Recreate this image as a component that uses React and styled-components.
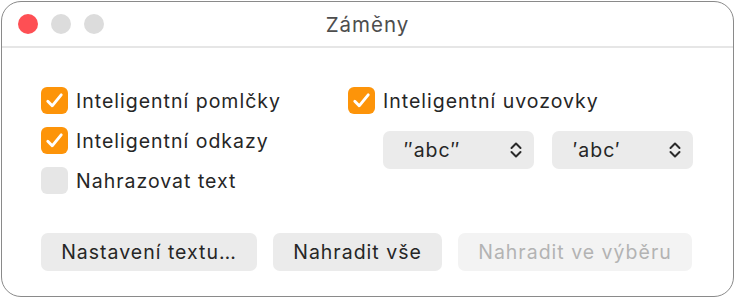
import React from "react";
import styled, { createGlobalStyle } from "styled-components";

const GlobalStyle = createGlobalStyle`
  html, body {
    margin: 0;
    padding: 0;
    background: #ffffff;
  }
  body {
    font-family: Inter, "Noto Sans", "Liberation Sans", sans-serif;
    -webkit-font-smoothing: antialiased;
  }
`;

const Window = styled.div`
  box-sizing: border-box;
  margin: 1px 0 0 1px;
  width: 733px;
  height: 296px;
  border: 1px solid #8a8a8a;
  border-radius: 20px;
  background: #ffffff;
  overflow: hidden;
  display: flex;
  flex-direction: column;
`;

const TitleBar = styled.div`
  height: 44px;
  flex: none;
  border-bottom: 2px solid #e6e6e6;
  display: flex;
  align-items: center;
  position: relative;
  padding-left: 16px;
`;

const Lights = styled.div`
  display: flex;
  gap: 13px;
`;

const Light = styled.span`
  width: 20px;
  height: 20px;
  border-radius: 50%;
  background: ${(p) => p.$color};
`;

const Title = styled.div`
  position: absolute;
  left: 0;
  right: 0;
  top: 0;
  height: 44px;
  display: flex;
  align-items: center;
  justify-content: center;
  font-size: 20.5px;
  letter-spacing: 1px;
  color: #4d4d4d;
  pointer-events: none;
`;

const Body = styled.div`
  flex: 1;
  padding: 39px 0 0 39px;
  display: flex;
  flex-direction: column;
`;

const Columns = styled.div`
  display: flex;
`;

const Column = styled.div`
  display: flex;
  flex-direction: column;
  gap: 13px;
  width: ${(p) => p.$width || "auto"};
`;

const CheckRow = styled.label`
  display: flex;
  align-items: center;
  gap: 8px;
  height: 27px;
  font-size: 19.5px;
  letter-spacing: 1px;
  color: #262626;
`;

const Box = styled.span`
  width: 27px;
  height: 27px;
  border-radius: 6px;
  background: ${(p) => (p.$checked ? "#fd9409" : "#e6e6e6")};
  display: flex;
  align-items: center;
  justify-content: center;
  flex: none;
`;

const Popups = styled.div`
  display: flex;
  gap: 18px;
  margin: 4px 0 0 35px;
`;

const Popup = styled.div`
  box-sizing: border-box;
  width: ${(p) => p.$width}px;
  height: 38px;
  border-radius: 7px;
  background: #ebebeb;
  display: flex;
  align-items: center;
  justify-content: space-between;
  padding: 0 11px 0 21px;
  font-size: 19.5px;
  letter-spacing: 1px;
  color: #262626;
`;

const Buttons = styled.div`
  display: flex;
  gap: 16px;
  margin-top: 39px;
`;

const Button = styled.button`
  box-sizing: border-box;
  height: 38px;
  width: ${(p) => p.$width}px;
  border: none;
  border-radius: 7px;
  background: ${(p) => (p.disabled ? "#f3f3f3" : "#ebebeb")};
  color: ${(p) => (p.disabled ? "#b3b3b3" : "#262626")};
  font-family: inherit;
  font-size: 19.5px;
  letter-spacing: 1px;
  padding: 0;
`;

const Check = () => (
  <svg width="19" height="17" viewBox="0 0 19 17">
    <path
      d="M2.8 9.2 L7.2 13.8 L16.2 2.8"
      fill="none"
      stroke="#ffffff"
      strokeWidth="2.9"
      strokeLinecap="round"
      strokeLinejoin="round"
    />
  </svg>
);

const Chevrons = () => (
  <svg width="14" height="18" viewBox="0 0 14 18">
    <path
      d="M2.5 7 L7 2.5 L11.5 7 M2.5 11 L7 15.5 L11.5 11"
      fill="none"
      stroke="#2a2a2a"
      strokeWidth="2"
      strokeLinecap="round"
      strokeLinejoin="round"
    />
  </svg>
);

const Checkbox = ({ checked, children }) => (
  <CheckRow>
    <Box $checked={checked}>{checked && <Check />}</Box>
    {children}
  </CheckRow>
);

export default function App() {
  return (
    <>
      <GlobalStyle />
      <Window>
        <TitleBar>
          <Lights>
            <Light $color="#fe4f54" />
            <Light $color="#dcdcdc" />
            <Light $color="#dcdcdc" />
          </Lights>
          <Title>Záměny</Title>
        </TitleBar>
        <Body>
          <Columns>
            <Column $width="307px">
              <Checkbox checked>Inteligentní pomlčky</Checkbox>
              <Checkbox checked>Inteligentní odkazy</Checkbox>
              <Checkbox>Nahrazovat text</Checkbox>
            </Column>
            <Column>
              <Checkbox checked>Inteligentní uvozovky</Checkbox>
              <Popups>
                <Popup $width={151}>
                  <span>″abc″</span>
                  <Chevrons />
                </Popup>
                <Popup $width={141}>
                  <span>′abc′</span>
                  <Chevrons />
                </Popup>
              </Popups>
            </Column>
          </Columns>
          <Buttons>
            <Button $width={216}>Nastavení textu…</Button>
            <Button $width={169}>Nahradit vše</Button>
            <Button $width={234} disabled>
              Nahradit ve výběru
            </Button>
          </Buttons>
        </Body>
      </Window>
    </>
  );
}
